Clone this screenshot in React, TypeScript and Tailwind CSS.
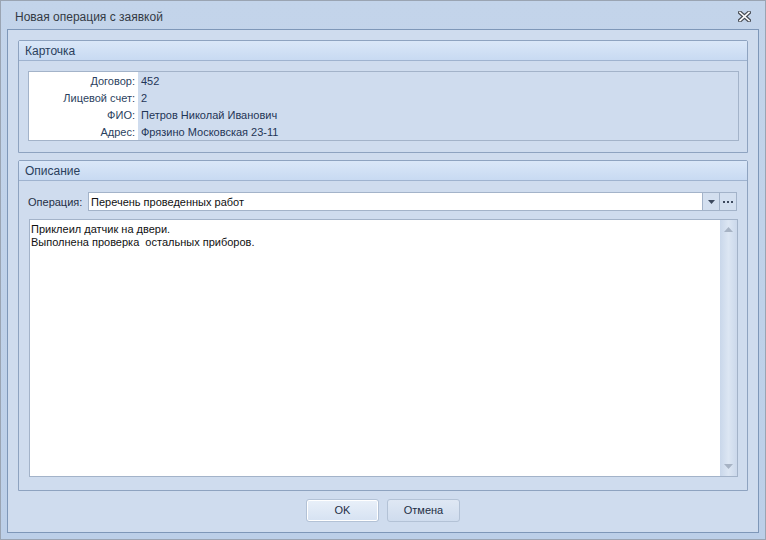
import type { ReactNode } from 'react';

const font = { fontFamily: '"Liberation Sans", Arial, sans-serif' };

const cardRows = [
    { label: 'Договор:', value: '452' },
    { label: 'Лицевой счет:', value: '2' },
    { label: 'ФИО:', value: 'Петров Николай Иванович' },
    { label: 'Адрес:', value: 'Фрязино Московская 23-11' },
];

const GroupBox = ({ title, children, className = '' }: { title: string; children: ReactNode; className?: string }) => (
    <div className={`flex flex-col border border-[#8ea3c0] rounded-t-[2px] bg-[#cfdcee] ${className}`}>
        <div className="h-[20px] shrink-0 flex items-center px-[6px] pt-[1px] border-b border-[#9fb3cf] bg-gradient-to-b from-[#dae7f8] to-[#c8daf2] text-[12px] text-[#2a3f5c]">
            {title}
        </div>
        {children}
    </div>
);

const CloseIcon = () => (
    <svg width="13" height="11" viewBox="0 0 13 11">
        <path d="M2 1.5 L11 9.5 M11 1.5 L2 9.5" stroke="#4a4f57" strokeWidth="4" strokeLinecap="square" />
        <path d="M2 1.5 L11 9.5 M11 1.5 L2 9.5" stroke="#ffffff" strokeWidth="1.6" strokeLinecap="square" />
    </svg>
);

export default function App() {
    return (
        <div style={font} className="w-[766px] h-[540px] flex flex-col border border-[#9aa4b2] bg-gradient-to-b from-[#c3d4ea] to-[#bccfe8]">
            {/* Title bar */}
            <div className="h-[28px] shrink-0 flex items-center justify-between pl-[14px] pr-[14px] pt-[3px]">
                <span className="text-[12px] text-[#333a44]">Новая операция с заявкой</span>
                <CloseIcon />
            </div>

            {/* Client area */}
            <div className="flex-1 mx-[6px] mb-[6px] flex flex-col gap-[7px] border border-[#7e97b8] bg-[#cfdcee] p-[10px]">
                <GroupBox title="Карточка" className="h-[113px] shrink-0">
                    <div className="pt-[10px] pl-[9px] pr-[8px]">
                        <div className="border border-[#a3b3c9]">
                            {cardRows.map(r => (
                                <div key={r.label} className="flex h-[17px] overflow-hidden text-[11px] leading-[19px]">
                                    <div className="w-[109px] bg-white text-right pr-[3px] text-[#2b3f5e]">{r.label}</div>
                                    <div className="pl-[3px] text-[#1f3556]">{r.value}</div>
                                </div>
                            ))}
                        </div>
                    </div>
                </GroupBox>

                <GroupBox title="Описание" className="flex-1">
                    <div className="flex-1 flex flex-col pt-[11px] pl-[9px] pr-[10px] pb-[13px] gap-[8px]">
                        <div className="flex items-center h-[19px]">
                            <span className="w-[60px] pt-[1px] whitespace-nowrap text-[11px] text-[#1f2f45]">Операция:</span>
                            <div className="flex-1 h-[19px] flex border border-[#a3b3c9] bg-white">
                                <div className="flex-1 pl-[2px] text-[11px] leading-[18px] text-[#111]">Перечень проведенных работ</div>
                                <div className="w-[17px] border-l border-[#a3b3c9] bg-[#d3dfef] flex items-center justify-center">
                                    <svg width="7" height="4" viewBox="0 0 7 4"><path d="M0 0 H7 L3.5 4 Z" fill="#3d4a5e" /></svg>
                                </div>
                                <div className="w-[17px] border-l border-[#a3b3c9] bg-[#d3dfef] flex items-center justify-center gap-[2px]">
                                    <span className="w-[2px] h-[2px] bg-[#3d4a5e]" />
                                    <span className="w-[2px] h-[2px] bg-[#3d4a5e]" />
                                    <span className="w-[2px] h-[2px] bg-[#3d4a5e]" />
                                </div>
                            </div>
                        </div>
                        <div className="flex-1 ml-[1px] mr-[-1px] flex border border-[#a3b3c9] bg-white">
                            <div className="flex-1 pl-[1px] pt-[3px] text-[11px] leading-[13px] text-[#111] whitespace-pre">
                                {'Приклеил датчик на двери.\nВыполнена проверка  остальных приборов.'}
                            </div>
                            <div className="w-[17px] flex flex-col justify-between items-center py-[7px] bg-gradient-to-r from-[#c9d7ea] via-[#dce6f3] to-[#cbd8eb]">
                                <svg width="9" height="5" viewBox="0 0 9 5"><path d="M0 5 L4.5 0 L9 5 Z" fill="#a7b3c4" /></svg>
                                <svg width="9" height="5" viewBox="0 0 9 5"><path d="M0 0 L9 0 L4.5 5 Z" fill="#a7b3c4" /></svg>
                            </div>
                        </div>
                    </div>
                </GroupBox>

                {/* Dialog buttons */}
                <div className="h-[24px] shrink-0 flex justify-center items-start gap-[8px] pt-[1px]">
                    <button className="w-[73px] h-[23px] rounded-[3px] border border-[#b3c2d6] bg-gradient-to-b from-[#e9f0f9] to-[#d6e2f2] shadow-[inset_0_0_0_1px_#ffffff] text-[11px] text-[#1f2f45]">OK</button>
                    <button className="w-[73px] h-[23px] rounded-[3px] border border-[#b3c2d6] bg-gradient-to-b from-[#dfe8f4] to-[#cfdcee] text-[11px] text-[#1f2f45]">Отмена</button>
                </div>
            </div>
        </div>
    );
}
